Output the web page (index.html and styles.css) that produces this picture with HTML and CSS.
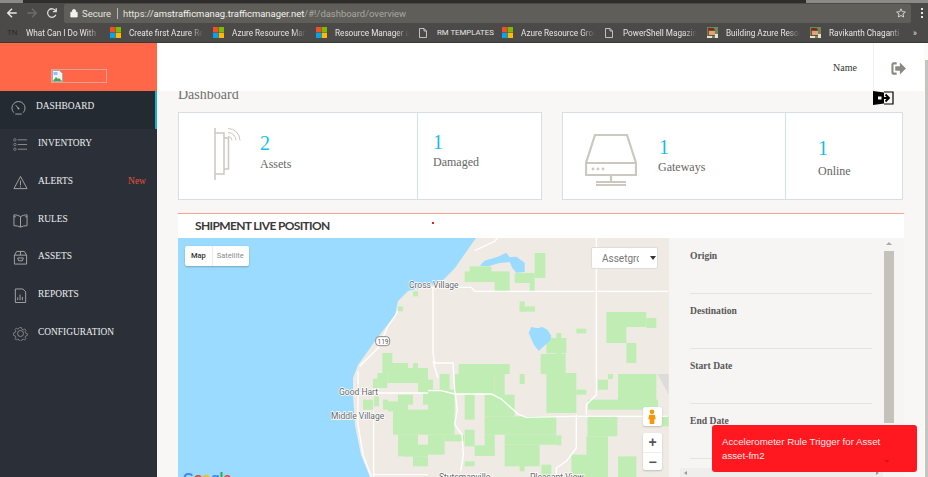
FILE: index.html
```html
<!DOCTYPE html>
<html lang="en">
<head>
<meta charset="utf-8">
<title>Dashboard</title>
<link rel="stylesheet" href="styles.css">
</head>
<body>
<div class="browser">
  <div class="tabstrip"></div>
  <div class="toolbar">
    <svg class="nav" viewBox="0 0 14 14"><path d="M12.500 7H2M7 2 2 7l5 5" fill="none" stroke="#e8e8e6" stroke-width="1.600"/></svg>
    <svg class="nav" viewBox="0 0 14 14"><path d="M1.500 7H12M7 2l5 5-5 5" fill="none" stroke="#6d6c69" stroke-width="1.600"/></svg>
    <svg class="nav" viewBox="0 0 14 14"><path d="M11.500 9a5 5 0 1 1-.3-4.500M12 1.500v4H8" fill="none" stroke="#dcdcda" stroke-width="1.500"/></svg>
    <div class="omnibox">
      <svg class="lock" viewBox="0 0 10 12"><path d="M1 5h8v6H1zM3 5V3.500a2 2 0 0 1 4 0V5" fill="#f2f2f0" stroke="#f2f2f0"/></svg>
      <span class="secure">Secure</span>
      <span class="omni-sep"></span>
      <span class="url">https://<b>amstrafficmanag.trafficmanager.net</b><i>/#!/dashboard/overview</i></span>
      <svg class="star" viewBox="0 0 12 12"><path d="M6 1l1.500 3.400 3.700.4-2.800 2.400.8 3.600L6 9l-3.200 1.800.8-3.600L.8 4.800l3.700-.4z" fill="none" stroke="#e8e8e6"/></svg>
    </div>
    <div class="kebab"><span></span><span></span><span></span></div>
  </div>
  <div class="bookmarks">
    <span class="tn">TN</span>
    <span class="bm">What Can I Do With</span>
    <svg class="ms" viewBox="0 0 10 10"><path fill="#f25022" d="M0 0h4.800v4.800H0z"/><path fill="#7fba00" d="M5.200 0H10v4.800H5.200z"/><path fill="#00a4ef" d="M0 5.200h4.800V10H0z"/><path fill="#ffb900" d="M5.200 5.200H10V10H5.200z"/></svg>
    <span class="bm">Create first Azure Re</span>
    <svg class="ms" viewBox="0 0 10 10"><path fill="#f25022" d="M0 0h4.800v4.800H0z"/><path fill="#7fba00" d="M5.200 0H10v4.800H5.200z"/><path fill="#00a4ef" d="M0 5.200h4.800V10H0z"/><path fill="#ffb900" d="M5.200 5.200H10V10H5.200z"/></svg>
    <span class="bm">Azure Resource Man</span>
    <svg class="ms" viewBox="0 0 10 10"><path fill="#f25022" d="M0 0h4.800v4.800H0z"/><path fill="#7fba00" d="M5.200 0H10v4.800H5.200z"/><path fill="#00a4ef" d="M0 5.200h4.800V10H0z"/><path fill="#ffb900" d="M5.200 5.200H10V10H5.200z"/></svg>
    <span class="bm">Resource Manager a</span>
    <svg class="doc" viewBox="0 0 8 10"><path d="M.5.500h4.500l2.500 2.500v6.500h-7zM5 .5V3h2.500" fill="none" stroke="#dededc" stroke-width=".8"/></svg>
    <span class="bm bm-plain">RM TEMPLATES</span>
    <svg class="ms" viewBox="0 0 10 10"><path fill="#f25022" d="M0 0h4.800v4.800H0z"/><path fill="#7fba00" d="M5.200 0H10v4.800H5.200z"/><path fill="#00a4ef" d="M0 5.200h4.800V10H0z"/><path fill="#ffb900" d="M5.200 5.200H10V10H5.200z"/></svg>
    <span class="bm">Azure Resource Grou</span>
    <svg class="doc" viewBox="0 0 8 10"><path d="M.5.500h4.500l2.500 2.500v6.500h-7zM5 .5V3h2.500" fill="none" stroke="#dededc" stroke-width=".8"/></svg>
    <span class="bm">PowerShell Magazin</span>
    <svg class="face" viewBox="0 0 11 11"><path fill="#6b8a5c" d="M0 0h11v11H0z"/><path fill="#7a4a32" d="M1 2h7v7H1z"/><path fill="#e0a27a" d="M2 4h6v4H2z"/><path fill="#7a2c1e" d="M1 1h6v2H1z"/><path fill="#e6e2d4" d="M0 9h5v2H0zM8 7h3v4H8z"/></svg>
    <span class="bm">Building Azure Resou</span>
    <svg class="face" viewBox="0 0 11 11"><path fill="#6b8a5c" d="M0 0h11v11H0z"/><path fill="#7a4a32" d="M1 2h7v7H1z"/><path fill="#e0a27a" d="M2 4h6v4H2z"/><path fill="#7a2c1e" d="M1 1h6v2H1z"/><path fill="#e6e2d4" d="M0 9h5v2H0zM8 7h3v4H8z"/></svg>
    <span class="bm">Ravikanth Chaganti -</span>
    <span class="more">»</span>
  </div>
</div>

<div class="app">
  <aside class="sidebar">
    <div class="logo">
      <div class="broken">
        <svg viewBox="0 0 12 12"><path d="M.5.500h7l3 3v8h-10z" fill="#f4f4f4" stroke="#a9a9a9"/><path d="M1 11l3-4 2 2 1-1 3 3z" fill="#4aa45a"/><path d="M1.500 2h4v3h-4z" fill="#9cc0ee"/></svg>
      </div>
    </div>
    <nav class="menu">
      <a class="item active">
        <svg class="mi" viewBox="0 0 16 16"><path d="M3 13.500a7 7 0 1 1 10 0M8 9 5 5.500M4.500 15h7" fill="none" stroke="#a6a8aa"/><circle cx="8" cy="9" r="1" fill="#a6a8aa"/></svg>
        <span>DASHBOARD</span>
      </a>
      <a class="item">
        <svg class="mi" viewBox="0 0 16 16"><path d="M5 3h10M5 8h10M5 13h10" stroke="#8d8f92" fill="none"/><g fill="none" stroke="#8d8f92" stroke-width=".8"><circle cx="2" cy="3" r="1.300"/><circle cx="2" cy="8" r="1.300"/><circle cx="2" cy="13" r="1.300"/></g></svg>
        <span>INVENTORY</span>
      </a>
      <a class="item">
        <svg class="mi" viewBox="0 0 16 16"><path d="M8 1.500 15 14.500H1zM8 6v5M8 12v1.200" fill="none" stroke="#a6a8aa"/></svg>
        <span>ALERTS</span><em>New</em>
      </a>
      <a class="item">
        <svg class="mi" viewBox="0 0 16 16"><path d="M8 4C6 2.500 3.500 2 1 2v11.500c2.500 0 5 .5 7 1.500 2-1 4.500-1.500 7-1.500V2c-2.500 0-5 .5-7 2zM8 4v11M1 4h2M15 4h-2" fill="none" stroke="#a6a8aa"/></svg>
        <span>RULES</span>
      </a>
      <a class="item">
        <svg class="mi" viewBox="0 0 16 16"><path d="M1.500 5.500h13V15h-13zM1.500 5.500 4 1.500h8l2.500 4M8 1.500v4M5 8.500h6l-1 3H6z" fill="none" stroke="#a6a8aa"/></svg>
        <span>ASSETS</span>
      </a>
      <a class="item">
        <svg class="mi" viewBox="0 0 16 16"><path d="M2.500 1h8l3 3v11.500h-11zM5 13v-3M7.500 13V7M10 13V9.500" fill="none" stroke="#a6a8aa"/></svg>
        <span>REPORTS</span>
      </a>
      <a class="item">
        <svg class="mi" viewBox="0 0 16 16"><path d="M6.800 1h2.400l.5 2 1.800.8 1.800-1 1.500 1.600-1 1.800.7 1.800 2 .5v2.300l-2 .5-.7 1.800 1 1.800-1.500 1.500-1.800-1-1.800.7-.5 2H6.800l-.5-2-1.800-.7-1.800 1-1.500-1.500 1-1.800-.7-1.800-2-.5V7.500l2-.5.7-1.800-1-1.800 1.500-1.600 1.800 1 1.800-.8z" transform="translate(1.100 .8) scale(.86)" fill="none" stroke="#8d8f92"/><circle cx="8" cy="8" r="3.200" fill="none" stroke="#8d8f92"/></svg>
        <span>CONFIGURATION</span>
      </a>
    </nav>
  </aside>

  <main class="main">
    <header class="topbar">
      <span class="user">Name</span>
      <div class="logout">
        <svg viewBox="0 0 16 14"><path d="M6 1.500H2.500a1 1 0 0 0-1 1v9a1 1 0 0 0 1 1H6" fill="none" stroke="#8a8883" stroke-width="2.200"/><path d="M4.500 4.500H9.500V.5L16 7l-6.500 6.500v-4H4.500z" fill="#8a8883"/></svg>
      </div>
    </header>
    <div class="content">
      <svg class="enter" viewBox="0 0 21 14"><path d="M0 0l11 1.500v11L0 14z" fill="#000"/><path d="M11 1h9v12h-9" fill="none" stroke="#000" stroke-width="1.200"/><path d="M6 7h10M12.500 3.500 16 7l-3.500 3.500" fill="none" stroke="#000" stroke-width="1.800"/><path d="M5 5.500h3.500v3H5z" fill="#fff"/></svg>
      <h1 class="page-title">Dashboard</h1>
      <section class="stats">
        <div class="card card-a">
          <div class="cell cell-main cell-assets">
            <svg class="ic-assets" viewBox="0 0 28 52"><path d="M1 0v52M1 5h9v41H1M10 10h4.500v31H10" fill="none" stroke="#cbc8c0" stroke-width="1.500"/><path d="M14 .5A12 12 0 0 1 26 12.500M14 4.500A8 8 0 0 1 22 12.500M14 8.500A4 4 0 0 1 18 12.500" fill="none" stroke="#cbc8c0" stroke-width="1"/></svg>
            <div class="metric metric-assets"><strong>2</strong><span>Assets</span></div>
          </div>
          <div class="cell cell-side cell-damaged">
            <div class="metric"><strong>1</strong><span>Damaged</span></div>
          </div>
        </div>
        <div class="card card-b">
          <div class="cell cell-main cell-gateways">
            <svg class="ic-gateway" viewBox="0 0 52 52"><path d="M10 1h32l9 28H1zM1 29h50v12H1zM26 41v6M11 48h30M11 51h30" fill="none" stroke="#cbc8c0" stroke-width="2.200"/><circle cx="8" cy="35" r="1.400" fill="#cbc8c0"/><circle cx="13" cy="35" r="1.400" fill="#cbc8c0"/><circle cx="18" cy="35" r="1.400" fill="#cbc8c0"/></svg>
            <div class="metric metric-gateways"><strong>1</strong><span>Gateways</span></div>
          </div>
          <div class="cell cell-side cell-online">
            <div class="metric"><strong>1</strong><span>Online</span></div>
          </div>
        </div>
      </section>

      <section class="panel">
        <h2 class="panel-title">SHIPMENT LIVE POSITION</h2>
        <i class="red-dot"></i>
        <div class="panel-body">
          <div class="map">
            <svg class="map-art" viewBox="0 0 491 239" preserveAspectRatio="none">
              <rect width="491" height="239" fill="#efebe4"/>
              <path d="M0 0H298L293 7 277 30 262 45 230 53 220 63 217 77 197 103 180 127 175 140 175 157 177 187 183 217 192 239H0z" fill="#9adbff"/>
              <g transform="scale(.33333)" fill="#c0edb4">
                <rect x="613" y="345" width="30" height="60"/><rect x="598" y="405" width="30" height="45"/><rect x="585" y="422" width="20" height="28"/>
                <rect x="628" y="375" width="62" height="60"/><rect x="690" y="390" width="60" height="45"/><rect x="705" y="375" width="15" height="30"/><rect x="720" y="420" width="30" height="45"/>
                <rect x="555" y="485" width="30" height="30"/><rect x="588" y="475" width="15" height="30"/><rect x="615" y="485" width="15" height="30"/><rect x="630" y="490" width="60" height="30"/><rect x="660" y="470" width="45" height="30"/>
                <rect x="645" y="515" width="105" height="75"/><rect x="660" y="590" width="60" height="65"/><rect x="675" y="620" width="75" height="35"/><rect x="705" y="655" width="45" height="30"/><rect x="735" y="460" width="15" height="40"/>
                <rect x="660" y="205" width="15" height="15"/><rect x="705" y="160" width="15" height="15"/>
              </g>
              <g transform="translate(250 0) scale(.33333)" fill="#c0edb4">
                <rect x="110" y="100" width="135" height="32"/><rect x="200" y="130" width="45" height="30"/><rect x="125" y="85" width="65" height="30"/>
                <rect x="320" y="45" width="32" height="75"/><rect x="260" y="105" width="60" height="30"/><rect x="305" y="133" width="15" height="28"/>
                <rect x="275" y="190" width="15" height="30"/><rect x="275" y="205" width="46" height="16"/>
                <rect x="535" y="222" width="120" height="45"/><rect x="535" y="265" width="60" height="50"/><rect x="655" y="240" width="30" height="30"/><rect x="595" y="315" width="30" height="60"/>
                <rect x="445" y="272" width="30" height="14"/>
                <rect x="385" y="285" width="15" height="65"/><rect x="355" y="300" width="60" height="46"/><rect x="338" y="348" width="75" height="60"/><rect x="355" y="405" width="90" height="120"/><rect x="445" y="455" width="30" height="15"/>
                <rect x="92" y="378" width="153" height="30"/><rect x="80" y="408" width="120" height="60"/><rect x="200" y="408" width="30" height="70"/><rect x="275" y="408" width="15" height="30"/>
                <rect x="570" y="408" width="115" height="90"/><rect x="540" y="408" width="15" height="15"/><rect x="510" y="425" width="30" height="30"/><rect x="480" y="485" width="210" height="30"/>
                <rect x="0" y="425" width="15" height="30"/><rect x="35" y="408" width="30" height="50"/><rect x="0" y="455" width="80" height="135"/><rect x="0" y="590" width="50" height="60"/><rect x="50" y="590" width="58" height="20"/>
                <rect x="110" y="470" width="30" height="75"/><rect x="170" y="470" width="90" height="65"/><rect x="170" y="535" width="215" height="55"/><rect x="230" y="590" width="155" height="30"/><rect x="230" y="620" width="105" height="65"/><rect x="110" y="575" width="30" height="50"/><rect x="140" y="622" width="60" height="32"/><rect x="170" y="590" width="30" height="60"/><rect x="275" y="680" width="15" height="20"/><rect x="385" y="592" width="15" height="30"/><rect x="340" y="680" width="30" height="37"/>
                <rect x="478" y="535" width="90" height="60"/><rect x="475" y="595" width="65" height="60"/><rect x="430" y="650" width="110" height="67"/><rect x="570" y="655" width="55" height="62"/><rect x="702" y="535" width="20" height="30"/>
                <rect x="110" y="670" width="30" height="15"/>
                <path fill="#dedcd8" d="M688 408h34v62z"/>
                <path fill="#9adbff" d="M155 83l15-15 40-12 25-12 10 14 20-2 25 18v28l-25 2-12-14-8-18-30 3-35 10zM302 285l8-18 18 4 15-4 15 8 12 18-3 14-35 32-15-20z"/>
                <path fill="none" stroke="#ffffff" stroke-width="4" d="M15 148V345l5 30h55l5 80 8 60-8 45 22 30 4 60-8 50M0 458h40l40 10H190l30 15 50 45 25 10 135-3H720M0 148h130l10 12H720M505 0v470l-30 30v30M445 530v100l-30 40-30 20v30M30 420l-15-50M140 38l60-28 10-12"/>
              </g>
              <g transform="scale(.33333)">
                <path fill="none" stroke="#ffffff" stroke-width="4" d="M540 400V560l15 90 25 67M660 220 630 265 600 330 545 385M540 465H750M587 515V717M587 710H750"/>
                <rect x="593" y="296" width="42" height="27" rx="10" fill="#fff" stroke="#8a8a86" stroke-width="3"/>
              </g>
              <text class="lbl shield" x="205" y="106">119</text>
              <text class="lbl" x="231" y="50">Cross Village</text>
              <text class="lbl" x="161" y="157">Good Hart</text>
              <text class="lbl" x="153" y="181">Middle Village</text>
              <text class="lbl" x="261" y="242">Stutsmanville</text>
              <text class="lbl" x="352" y="242">Pleasant View</text>
            </svg>
            <div class="maptype"><span class="on">Map</span><span>Satellite</span></div>
            <div class="group-select"><span>Assetgrc</span><i></i></div>
            <div class="pegman">
              <svg viewBox="0 0 10 16"><circle cx="5" cy="3" r="2.500" fill="#f29a0c"/><path d="M2 6h6l1 5H7.500v5h-5v-5H1z" fill="#f29a0c"/></svg>
            </div>
            <div class="zoom"><b>+</b><b>−</b></div>
            <div class="google"><span class="g-b">G</span><span class="g-r">o</span><span class="g-y">o</span><span class="g-b">g</span><span class="g-g">l</span><span class="g-r">e</span></div>
          </div>
          <div class="details">
            <div class="fields">
              <div class="field">Origin</div>
              <div class="field">Destination</div>
              <div class="field">Start Date</div>
              <div class="field">End Date</div>
            </div>
            <div class="vscroll"><u></u><i></i></div>
            <div class="hscroll"><u></u><u></u></div>
          </div>
        </div>
      </section>
    </div>
    <div class="pagebar"><i></i></div>
  </main>
</div>
<div class="toast">Accelerometer Rule Trigger for Asset asset-fm2<u></u></div>
</body>
</html>
```

FILE: styles.css
```css
* { box-sizing: border-box; }
html, body { margin: 0; padding: 0; height: 100%; overflow: hidden; }
body { display: flex; flex-direction: column; width: 928px; height: 477px; background: #f8f7f5; font-family: "Liberation Serif", serif; position: relative; }

.browser { flex: none; height: 43px; background: #4b4a48; border-bottom: 1px solid #3a3a38; font-family: Roboto, "Noto Sans", sans-serif; color: #e6e6e4; }
.tabstrip { height: 3px; background: linear-gradient(90deg, #8a8a86 0, #8a8a86 23px, #2e2d2c 23px, #2e2d2c 806px, #8a8a86 806px); }
.toolbar { height: 20px; display: flex; align-items: center; padding-left: 6px; }
.nav { width: 12px; height: 12px; flex: none; margin-right: 8px; }
.omnibox { flex: none; margin-left: -2px; width: 847px; height: 19px; background: #5f5e58; border-radius: 2px; display: flex; align-items: center; padding-left: 6px; font-size: 9.500px; }
.lock { width: 8px; height: 10px; margin-right: 4px; }
.secure { color: #e6e6e4; width: 28px; flex: none; }
.omni-sep { width: 1px; height: 11px; background: #b8b8b4; margin: 0 5px 0 7px; }
.url { font-size: 9.450px; color: #e2e2df; }
.url b { font-weight: 400; color: #f4f4f2; }
.url i { font-style: normal; color: #a9a8a3; }
.star { width: 10px; height: 10px; margin-left: auto; margin-right: 5px; }
.kebab { margin-left: 10px; display: flex; flex-direction: column; gap: 2px; }
.kebab span { width: 2px; height: 2px; background: #e6e6e4; }
.bookmarks { height: 19px; display: flex; align-items: center; padding-left: 7px; font-size: 8.200px; white-space: nowrap; }
.tn { width: 19px; color: #2b2b2a; font-size: 8px; }
.bm { width: 74px; margin-right: 10px; overflow: hidden; -webkit-mask-image: linear-gradient(90deg, #000 82%, transparent); mask-image: linear-gradient(90deg, #000 82%, transparent); }
.bm:first-of-type { -webkit-mask-image: none; mask-image: none; }
.bm-plain { width: 57px; margin-right: 8px; font-size: 7.800px; -webkit-mask-image: none; mask-image: none; }
.ms, .face { width: 11px; height: 11px; flex: none; margin-right: 8px; }
.doc { width: 8px; height: 10px; flex: none; margin-right: 10px; }
.more { margin-left: 0; }

.app { flex: 1; min-height: 0; display: flex; }
.sidebar { flex: none; width: 157px; background: #2b3038; }
.logo { height: 48px; background: #ff6748; padding: 26px 0 0 51px; }
.broken { width: 56px; height: 14px; border: 1px solid #e2a392; display: flex; align-items: center; }
.broken svg { width: 12px; height: 12px; display: block; }
.menu { display: flex; flex-direction: column; }
.item { height: 37.670px; display: flex; align-items: center; padding: 0 11px 5px 13px; color: #eef0f2; font-size: 9.400px; }
.item span { flex: none; margin-bottom: 3px; }
.item em { margin: 0 0 3px auto; color: #e8503a; font-style: normal; font-size: 9.500px; }
.mi { width: 15px; height: 15px; flex: none; margin-right: 10px; }
.item.active { background: #242a31; border-right: 2px solid #14b4cf; padding-left: 11px; }

.main { flex: 1; min-width: 0; display: flex; flex-direction: column; position: relative; }
.topbar { flex: none; height: 48px; background: #fff; display: flex; align-items: flex-start; justify-content: flex-end; position: relative; z-index: 2; }
.user { font-size: 10px; color: #333; margin: 19px 16px 0 0; }
.logout { width: 55px; height: 48px; border-left: 1px solid #f1f1ef; padding: 19px 0 0 17px; }
.logout svg { width: 15px; height: 13px; display: block; }
.content { flex: 1; min-height: 0; padding: 0 24px 0 21px; position: relative; }
.enter { position: absolute; left: 716px; top: 0; width: 21px; height: 14px; z-index: 3; }
.page-title { margin: -4px 0 0; height: 25px; font-size: 14px; font-weight: 400; color: #6f6f6f; line-height: 16px; position: relative; }
.stats { display: flex; gap: 20px; }
.card { height: 88px; background: #fff; border: 1px solid #d5e0e2; display: flex; }
.card-a { width: 364px; }
.card-b { width: 341px; }
.cell { height: 100%; display: flex; align-items: flex-start; }
.cell-main { border-right: 1px solid #d5e0e2; }
.card-a .cell-main { width: 239px; }
.card-b .cell-main { width: 223px; }
.ic-assets { width: 28px; height: 52px; margin: 15px 0 0 35px; flex: none; }
.ic-gateway { width: 52px; height: 52px; margin: 21px 0 0 22px; flex: none; }
.metric { display: flex; flex-direction: column; font-size: 12px; color: #666; line-height: 14px; }
.metric strong { font-weight: 400; font-size: 20px; line-height: 22px; color: #12bfe3; }
.metric-assets { margin: 19px 0 0 18px; }
.cell-assets .metric span { margin-top: 3px; }
.cell-damaged { padding: 18px 0 0 15px; }
.cell-damaged .metric span { margin-top: 2px; }
.metric-gateways { margin: 23px 0 0 22px; }
.metric-gateways span { margin-top: 2px; margin-left: -1px; }
.cell-online { padding: 24px 0 0 32px; }
.cell-online .metric span { margin-top: 5px; }
.panel { margin-top: 13px; width: 726px; position: relative; border-top: 1px solid #ff9f8a; }
.panel-title { margin: 0; height: 24px; background: #fff; padding-left: 17px; font: 700 12px/24px Lato, "Liberation Sans", sans-serif; letter-spacing: -.65px; color: #3a3a3a; }
.red-dot { position: absolute; left: 254px; top: 8px; width: 2px; height: 2px; background: #e8202a; }
.panel-body { display: flex; height: 239px; }
.map { flex: none; width: 491px; height: 239px; position: relative; overflow: hidden; }
.map-art { display: block; width: 491px; height: 239px; }
.lbl { font: 400 8.500px Roboto, "Liberation Sans", sans-serif; fill: #666; stroke: #fff; stroke-width: 1.500px; paint-order: stroke; }
.shield { font-size: 6.500px; text-anchor: middle; stroke: none; fill: #555; }
.maptype { position: absolute; left: 7px; top: 8px; height: 20px; display: flex; background: #fff; border-radius: 2px; box-shadow: 0 1px 2px rgba(0,0,0,.25); font: 400 7.500px/20px Roboto, "Liberation Sans", sans-serif; color: #8c8c8c; }
.maptype span { padding: 0 5px 0 4px; }
.maptype .on { font-weight: 500; color: #333; border-right: 1px solid #ececec; padding: 0 6px; }
.group-select { position: absolute; left: 413px; top: 9px; width: 67px; height: 22px; background: #fff; border: 1px solid #ddd; border-radius: 2px; display: flex; align-items: center; padding-left: 10px; font: 400 10px Roboto, "Liberation Sans", sans-serif; color: #777; }
.group-select span { width: 37px; overflow: hidden; }
.group-select i { margin-left: 11px; border: 3px solid transparent; border-top: 4px solid #333; border-bottom: 0; }
.pegman { position: absolute; left: 465px; top: 169px; width: 19px; height: 19px; background: #fff; border-radius: 2px; padding: 2px 4px; box-shadow: 0 1px 2px rgba(0,0,0,.2); }
.pegman svg { display: block; width: 10px; height: 15px; }
.zoom { position: absolute; left: 465px; top: 195px; width: 19px; height: 37px; background: #fff; border-radius: 2px; box-shadow: 0 1px 2px rgba(0,0,0,.2); display: flex; flex-direction: column; font: 700 14px/18px "Liberation Sans", sans-serif; color: #555; text-align: center; }
.zoom b { height: 18.500px; }
.zoom b + b { border-top: 1px solid #eee; }
.google { position: absolute; left: 5px; top: 232px; font: 700 14px/16px "Liberation Sans", sans-serif; }
.g-b { color: #4285f4; } .g-r { color: #ea4335; } .g-y { color: #fbbc05; } .g-g { color: #34a853; }
.details { flex: 1; min-width: 0; background: #f6f5f3; display: flex; padding-left: 21px; position: relative; }
.fields { width: 182px; margin-top: 1px; display: flex; flex-direction: column; }
.field { flex: none; height: 55px; padding-top: 11px; border-bottom: 1px solid #e4e3e0; font-size: 9.600px; line-height: 12px; font-weight: 700; color: #585858; }
.vscroll { width: 10px; margin-left: 12px; height: 239px; padding-top: 4px; }
.vscroll u { display: block; width: 0; margin: 0 0 6px 2px; border: 3px solid transparent; border-bottom: 3px solid #aaa; border-top: 0; }
.vscroll i { display: block; width: 10px; height: 172px; background: #c4c2bb; }
.hscroll { position: absolute; left: 11px; top: 230px; width: 203px; height: 9px; background: #efeeec; display: flex; justify-content: space-between; align-items: center; padding: 0 4px; }
.hscroll u { width: 0; border: 2.500px solid transparent; border-left: 0; border-right: 3px solid #999; }
.hscroll u + u { border-right: 0; border-left: 3px solid #999; }
.pagebar { position: absolute; right: 0; top: 0; bottom: 0; width: 4px; background: #fbfbfa; z-index: 3; padding-top: 17px; }
.pagebar i { display: block; width: 3px; margin-left: 1px; height: 100%; background: #c4c4c0; }
.toast { position: absolute; left: 712px; top: 425px; width: 205px; height: 47px; background: #ff181f; border-radius: 3px; padding: 10px 10px 0; font: 400 9.700px/14px "Liberation Sans", sans-serif; color: #fbe8e8; z-index: 5; }
.toast u { position: absolute; left: 172px; top: 35px; border: 3px solid transparent; border-top: 3px solid #d8141a; border-bottom: 0; }
```
